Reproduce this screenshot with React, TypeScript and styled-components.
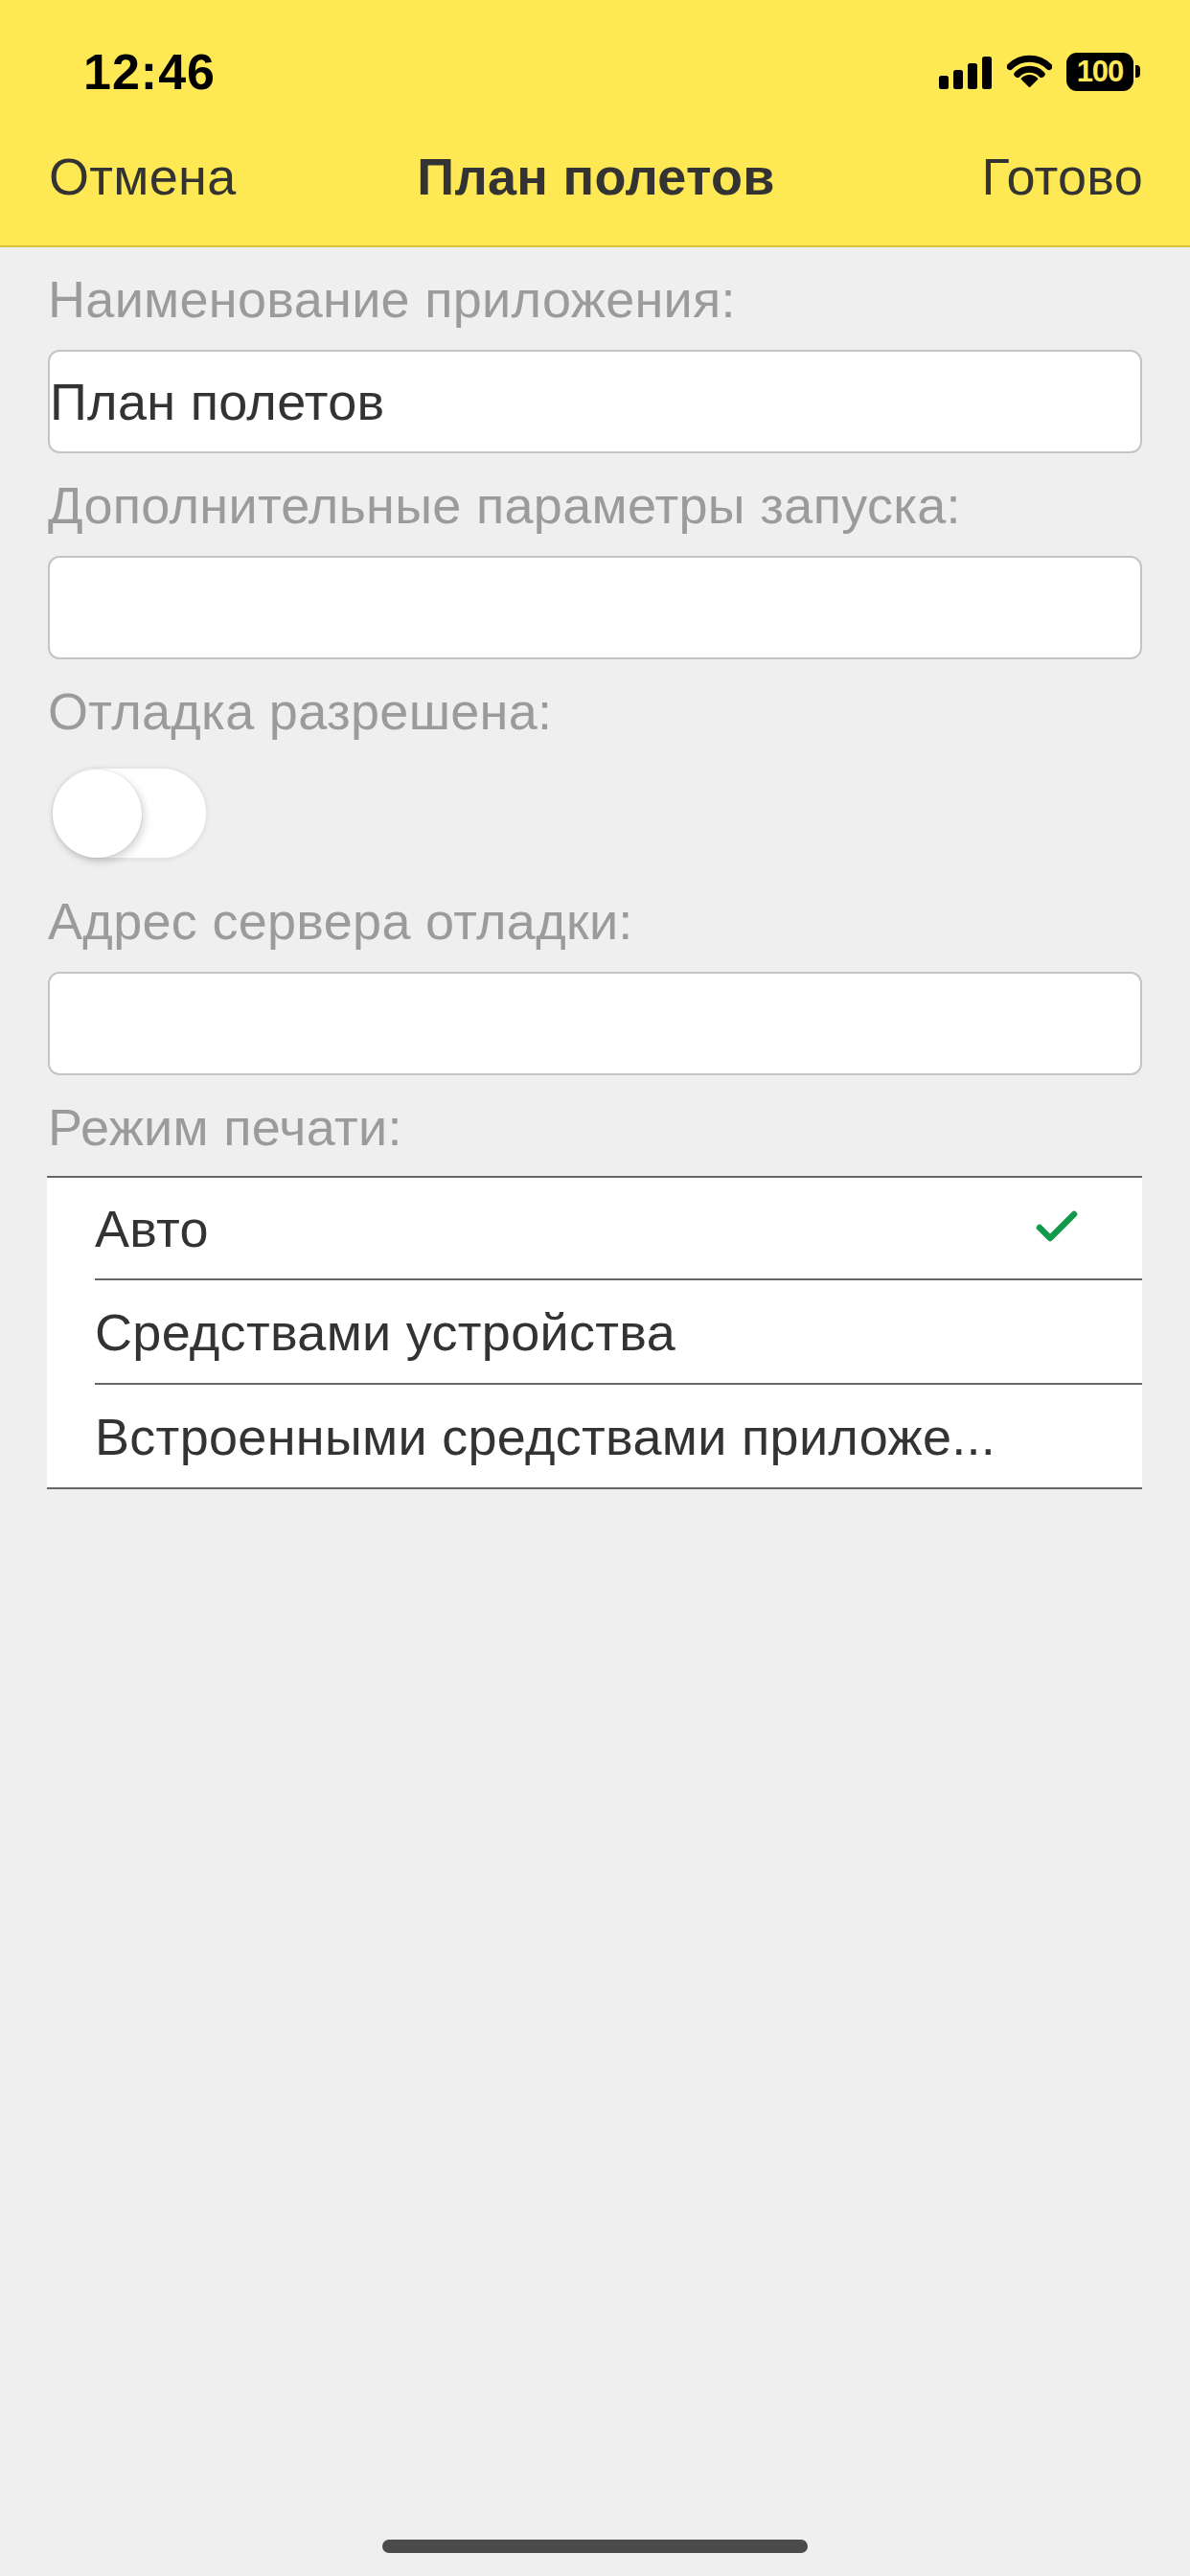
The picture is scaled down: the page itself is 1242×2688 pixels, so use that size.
import React from "react";
import styled, { createGlobalStyle } from "styled-components";

const GlobalStyle = createGlobalStyle`
  html, body {
    margin: 0;
    padding: 0;
    background: #efefef;
  }
  body {
    font-family: "Liberation Sans", Arial, Helvetica, sans-serif;
    -webkit-font-smoothing: antialiased;
  }
  *, *::before, *::after {
    box-sizing: border-box;
  }
`;

const Screen = styled.div`
  min-height: 2688px;
  display: flex;
  flex-direction: column;
  background: #efefef;
`;

const Header = styled.header`
  background: #fee853;
  border-bottom: 2px solid #d9c33b;
`;

const StatusBar = styled.div`
  height: 149px;
  display: flex;
  align-items: center;
  justify-content: space-between;
  padding: 0 52px 0 87px;
`;

const Clock = styled.span`
  font-size: 52px;
  font-weight: 700;
  color: #000;
  letter-spacing: 1px;
`;

const StatusIcons = styled.div`
  display: flex;
  align-items: center;
  gap: 16px;
`;

const SignalBars = styled.div`
  display: flex;
  align-items: flex-end;
  gap: 5px;
  height: 34px;
  margin-top: 2px;
`;

const Bar = styled.span<{ $h: number }>`
  width: 10px;
  height: ${(p) => p.$h}px;
  background: #000;
  border-radius: 2.5px;
`;

const Battery = styled.div`
  display: flex;
  align-items: center;
  gap: 2px;
  margin-left: -1px;
`;

const BatteryBody = styled.div`
  width: 70px;
  height: 40px;
  border-radius: 11px;
  background: #000;
  color: #fee853;
  font-size: 31px;
  font-weight: 700;
  letter-spacing: -1px;
  display: flex;
  align-items: center;
  justify-content: center;
`;

const BatteryCap = styled.span`
  width: 5px;
  height: 13px;
  background: #000;
  border-radius: 0 4px 4px 0;
`;

const NavBar = styled.nav`
  display: grid;
  grid-template-columns: 1fr auto 1fr;
  align-items: center;
  height: 70px;
  margin-bottom: 37px;
  padding: 0 49px 0 51px;
  font-size: 54px;
  letter-spacing: 0.3px;
  color: #333;
`;

const NavButton = styled.span<{ $align: "start" | "end" }>`
  justify-self: ${(p) => p.$align};
  white-space: nowrap;
`;

const NavTitle = styled.span`
  font-weight: 700;
  white-space: nowrap;
`;

const Form = styled.main`
  flex: 1;
  display: flex;
  flex-direction: column;
  gap: 22px;
  padding: 22px 50px 0;
`;

const Field = styled.section<{ $gap?: number }>`
  display: flex;
  flex-direction: column;
  gap: ${(p) => p.$gap ?? 21}px;
`;

const FieldLabel = styled.label`
  font-size: 54px;
  line-height: 64px;
  letter-spacing: 0.3px;
  color: #9b9b9b;
  white-space: nowrap;
`;

const TextBox = styled.input`
  display: block;
  width: 100%;
  height: 108px;
  margin: 0;
  padding: 0;
  background: #fff;
  border: 2px solid #c4c4c4;
  border-radius: 12px;
  font-family: inherit;
  font-size: 54px;
  letter-spacing: 0.3px;
  color: #333;
  outline: none;
`;

const ToggleRow = styled.div`
  padding: 5px 0 10px 3px;
`;

const Switch = styled.div`
  position: relative;
  width: 164px;
  height: 97px;
  border-radius: 49px;
  background: #fff;
  border: 2px solid #e6e6e6;
  box-shadow: 0 1px 4px rgba(0, 0, 0, 0.06);
`;

const Knob = styled.span`
  position: absolute;
  left: 0;
  top: 1px;
  width: 93px;
  height: 92px;
  border-radius: 50%;
  background: #fff;
  box-shadow: 3px 4px 8px rgba(0, 0, 0, 0.16), 0 0 0 1px rgba(0, 0, 0, 0.06);
`;

const OptionList = styled.ul`
  list-style: none;
  margin: 0 0 0 -1px;
  padding: 0;
  background: #fff;
  border-top: 2px solid #666;
  border-bottom: 2px solid #666;
`;

const Option = styled.li<{ $first?: boolean }>`
  display: flex;
  height: ${(p) => (p.$first ? 105 : 109)}px;
  padding-left: 50px;
  font-size: 54px;
  letter-spacing: 0.3px;
  color: #333;
`;

const OptionInner = styled.div<{ $first?: boolean }>`
  flex: 1;
  min-width: 0;
  display: flex;
  align-items: center;
  justify-content: space-between;
  padding-right: 66px;
  border-top: ${(p) => (p.$first ? "none" : "2px solid #666")};
`;

const OptionText = styled.span`
  white-space: nowrap;
  overflow: hidden;
`;

const HomeIndicatorArea = styled.div`
  display: flex;
  justify-content: center;
  padding-bottom: 24px;
`;

const HomeIndicator = styled.div`
  width: 444px;
  height: 14px;
  border-radius: 7px;
  background: #4b4b4b;
`;

const WifiIcon = () => (
  <svg width="47" height="35" viewBox="0 0 47 35" aria-hidden="true">
    <path
      d="M23.5 33 L15.7 25.2 A11 11 0 0 1 31.3 25.2 Z"
      fill="#000"
      stroke="#000"
      strokeWidth="2"
      strokeLinejoin="round"
    />
    <path
      d="M10.9 20.4 A18 18 0 0 1 36.1 20.4"
      fill="none"
      stroke="#000"
      strokeWidth="7"
      strokeLinecap="round"
    />
    <path
      d="M3.2 12.6 A29 29 0 0 1 43.8 12.6"
      fill="none"
      stroke="#000"
      strokeWidth="7"
      strokeLinecap="round"
    />
  </svg>
);

const CheckIcon = () => (
  <svg width="46" height="40" viewBox="0 0 46 40" aria-hidden="true">
    <polyline
      points="5,19 16,30 41,5"
      fill="none"
      stroke="#12994a"
      strokeWidth="6.5"
      strokeLinecap="round"
      strokeLinejoin="round"
    />
  </svg>
);

const options = [
  { text: "Авто", checked: true },
  { text: "Средствами устройства", checked: false },
  { text: "Встроенными средствами приложе...", checked: false },
];

export default function App() {
  return (
    <Screen>
      <GlobalStyle />
      <Header>
        <StatusBar>
          <Clock>12:46</Clock>
          <StatusIcons>
            <SignalBars>
              <Bar $h={14} />
              <Bar $h={20} />
              <Bar $h={27} />
              <Bar $h={34} />
            </SignalBars>
            <WifiIcon />
            <Battery>
              <BatteryBody>100</BatteryBody>
              <BatteryCap />
            </Battery>
          </StatusIcons>
        </StatusBar>
        <NavBar>
          <NavButton $align="start">Отмена</NavButton>
          <NavTitle>План полетов</NavTitle>
          <NavButton $align="end">Готово</NavButton>
        </NavBar>
      </Header>

      <Form>
        <Field>
          <FieldLabel>Наименование приложения:</FieldLabel>
          <TextBox readOnly value="План полетов" />
        </Field>
        <Field>
          <FieldLabel>Дополнительные параметры запуска:</FieldLabel>
          <TextBox readOnly value="" />
        </Field>
        <Field>
          <FieldLabel>Отладка разрешена:</FieldLabel>
          <ToggleRow>
            <Switch>
              <Knob />
            </Switch>
          </ToggleRow>
        </Field>
        <Field>
          <FieldLabel>Адрес сервера отладки:</FieldLabel>
          <TextBox readOnly value="" />
        </Field>
        <Field $gap={19}>
          <FieldLabel>Режим печати:</FieldLabel>
          <OptionList>
            {options.map((o, i) => (
              <Option key={o.text} $first={i === 0}>
                <OptionInner $first={i === 0}>
                  <OptionText>{o.text}</OptionText>
                  {o.checked && <CheckIcon />}
                </OptionInner>
              </Option>
            ))}
          </OptionList>
        </Field>
      </Form>

      <HomeIndicatorArea>
        <HomeIndicator />
      </HomeIndicatorArea>
    </Screen>
  );
}
